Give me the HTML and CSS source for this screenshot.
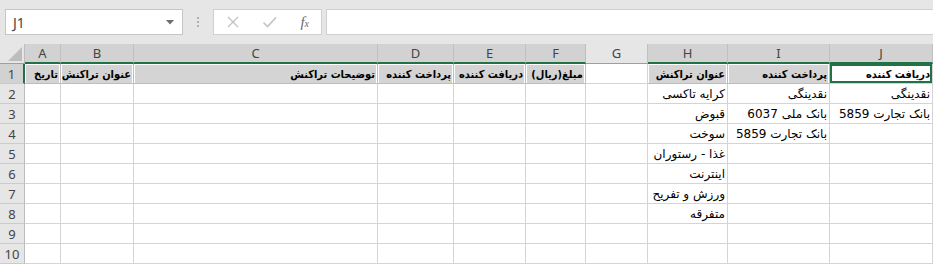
FILE: index.html
```html
<!DOCTYPE html>
<html lang="fa">
<head>
<meta charset="utf-8">
<title>Sheet</title>
<link rel="stylesheet" href="styles.css">
</head>
<body>
<div class="topbar">
  <div class="namebox"><span>J1</span><svg class="dd" width="8" height="5" viewBox="0 0 8 5"><path d="M0 0H8L4 4.5Z" fill="#6d6d6d"/></svg></div>
  <div class="grip"><i></i><i></i><i></i></div>
  <div class="fxbtns">
    <svg width="14" height="14" viewBox="0 0 14 14"><path d="M2 2L12 12M12 2L2 12" stroke="#c3c3c3" stroke-width="1.4" fill="none"/></svg>
    <svg width="16" height="14" viewBox="0 0 16 14"><path d="M1.5 7.5L5.5 11.5L14 2.5" stroke="#c3c3c3" stroke-width="1.6" fill="none"/></svg>
    <span class="fx">f<sub>x</sub></span>
  </div>
  <div class="formula"></div>
</div>
<div class="sheet">
  <div class="corner"><svg width="14" height="14" viewBox="0 0 14 14"><path d="M14 0V14H0Z" fill="#bcbcbc"/></svg></div>
  <div class="ch sh">A</div><div class="ch sh">B</div><div class="ch sh">C</div><div class="ch sh">D</div><div class="ch sh">E</div><div class="ch sh">F</div><div class="ch">G</div><div class="ch sh">H</div><div class="ch sh">I</div><div class="ch sh">J</div>

  <div class="rh rsel">1</div>
  <div class="c sel b">تاریخ</div><div class="c sel b">عنوان تراکنش</div><div class="c sel b">توضیحات تراکنش</div><div class="c sel b">پرداخت کننده</div><div class="c sel b">دریافت کننده</div><div class="c sel b">مبلغ(ریال)</div><div class="c"></div><div class="c sel b">عنوان تراکنش</div><div class="c sel b">پرداخت کننده</div><div class="c act b">دریافت کننده</div>

  <div class="rh">2</div>
  <div class="c"></div><div class="c"></div><div class="c"></div><div class="c"></div><div class="c"></div><div class="c"></div><div class="c"></div><div class="c">کرایه تاکسی</div><div class="c">نقدینگی</div><div class="c">نقدینگی</div>

  <div class="rh">3</div>
  <div class="c"></div><div class="c"></div><div class="c"></div><div class="c"></div><div class="c"></div><div class="c"></div><div class="c"></div><div class="c">قبوض</div><div class="c">بانک ملی 6037</div><div class="c">بانک تجارت 5859</div>

  <div class="rh">4</div>
  <div class="c"></div><div class="c"></div><div class="c"></div><div class="c"></div><div class="c"></div><div class="c"></div><div class="c"></div><div class="c">سوخت</div><div class="c">بانک تجارت 5859</div><div class="c"></div>

  <div class="rh">5</div>
  <div class="c"></div><div class="c"></div><div class="c"></div><div class="c"></div><div class="c"></div><div class="c"></div><div class="c"></div><div class="c">غذا - رستوران</div><div class="c"></div><div class="c"></div>

  <div class="rh">6</div>
  <div class="c"></div><div class="c"></div><div class="c"></div><div class="c"></div><div class="c"></div><div class="c"></div><div class="c"></div><div class="c">اینترنت</div><div class="c"></div><div class="c"></div>

  <div class="rh">7</div>
  <div class="c"></div><div class="c"></div><div class="c"></div><div class="c"></div><div class="c"></div><div class="c"></div><div class="c"></div><div class="c">ورزش و تفریح</div><div class="c"></div><div class="c"></div>

  <div class="rh">8</div>
  <div class="c"></div><div class="c"></div><div class="c"></div><div class="c"></div><div class="c"></div><div class="c"></div><div class="c"></div><div class="c">متفرقه</div><div class="c"></div><div class="c"></div>

  <div class="rh">9</div>
  <div class="c"></div><div class="c"></div><div class="c"></div><div class="c"></div><div class="c"></div><div class="c"></div><div class="c"></div><div class="c"></div><div class="c"></div><div class="c"></div>

  <div class="rh">10</div>
  <div class="c"></div><div class="c"></div><div class="c"></div><div class="c"></div><div class="c"></div><div class="c"></div><div class="c"></div><div class="c"></div><div class="c"></div><div class="c"></div>
</div>
</body>
</html>
```
FILE: styles.css
```css
html, body {
  margin: 0;
  padding: 0;
}
body {
  width: 933px;
  height: 266px;
  overflow: hidden;
  background: #fff;
  font-family: "Noto Sans", "DejaVu Sans", sans-serif;
  color: #000;
}
.topbar {
  height: 44px;
  box-sizing: border-box;
  background: #e6e6e6;
  display: flex;
  align-items: flex-start;
  padding: 9px 0 0 5px;
}
.namebox {
  width: 178px;
  height: 26px;
  box-sizing: border-box;
  background: #fff;
  border: 1px solid #c6c6c6;
  display: flex;
  align-items: center;
  justify-content: space-between;
  padding: 0 8px 0 7px;
  font-size: 14px;
  color: #444;
}
.dd {
  margin-top: 1px;
}
.grip {
  width: 30px;
  height: 26px;
  display: flex;
  flex-direction: column;
  align-items: center;
  justify-content: center;
  gap: 2px;
}
.grip i {
  display: block;
  width: 2px;
  height: 2px;
  background: #b0b0b0;
}
.fxbtns {
  width: 109px;
  height: 26px;
  box-sizing: border-box;
  background: #fff;
  border: 1px solid #d0d0d0;
  display: flex;
  align-items: center;
  justify-content: space-between;
  padding: 0 12px 0 12px;
}
.fx {
  font-family: "Liberation Serif", "DejaVu Serif", serif;
  font-style: italic;
  font-size: 15px;
  color: #6a6a6a;
  line-height: 1;
}
.fx sub {
  font-size: 10px;
  vertical-align: baseline;
  position: relative;
  top: 0;
}
.formula {
  flex: 1;
  height: 26px;
  box-sizing: border-box;
  margin: 0 -2px 0 4px;
  background: #fff;
  border: 1px solid #d0d0d0;
}
.sheet {
  display: grid;
  grid-template-columns: 25px 36px 73px 244px 76px 72px 60px 62px 80px 102px 103px;
  grid-auto-rows: 20px;
}
.corner {
  background: #e6e6e6;
  border-right: 1px solid #bdbdbd;
  border-bottom: 1px solid #9f9f9f;
  box-sizing: border-box;
  display: flex;
  align-items: flex-end;
  justify-content: flex-end;
  padding: 0 2px 2px 0;
}
.ch {
  box-sizing: border-box;
  background: #e6e6e6;
  border-right: 1px solid #c0c0c0;
  border-bottom: 1px solid #9f9f9f;
  font-size: 13px;
  color: #444;
  display: flex;
  align-items: center;
  justify-content: center;
  padding-bottom: 1px;
}
.ch.sh {
  background: #d2d2d2;
  border-bottom: 2px solid #217346;
  padding-bottom: 0;
}
.rh {
  box-sizing: border-box;
  background: #e6e6e6;
  border-right: 1px solid #bdbdbd;
  border-bottom: 1px solid #cbcbcb;
  font-size: 13px;
  color: #444;
  display: flex;
  align-items: center;
  justify-content: center;
}
.rh.rsel {
  background: #d2d2d2;
  border-right: 2px solid #217346;
}
.c {
  box-sizing: border-box;
  border-right: 1px solid #d4d4d4;
  border-bottom: 1px solid #d4d4d4;
  direction: rtl;
  text-align: right;
  white-space: nowrap;
  overflow: hidden;
  font-family: "DejaVu Sans", sans-serif;
  font-size: 12px;
  line-height: 21px;
  padding: 0 2px;
}
.c.b {
  font-family: "DejaVu Sans Condensed", "DejaVu Sans", sans-serif;
  font-stretch: condensed;
  font-weight: bold;
  font-size: 11px;
}
.c.sel {
  background: #d4d4d4;
  box-shadow: inset 1px 0 0 #fff, inset -1px 0 0 #fff, inset 0 1px 0 #fff;
  border-right-color: #bdbdbd;
  border-bottom-color: #bdbdbd;
}
.c.act {
  background: #fff;
  box-shadow: inset 0 0 0 2px #217346;
}
```
